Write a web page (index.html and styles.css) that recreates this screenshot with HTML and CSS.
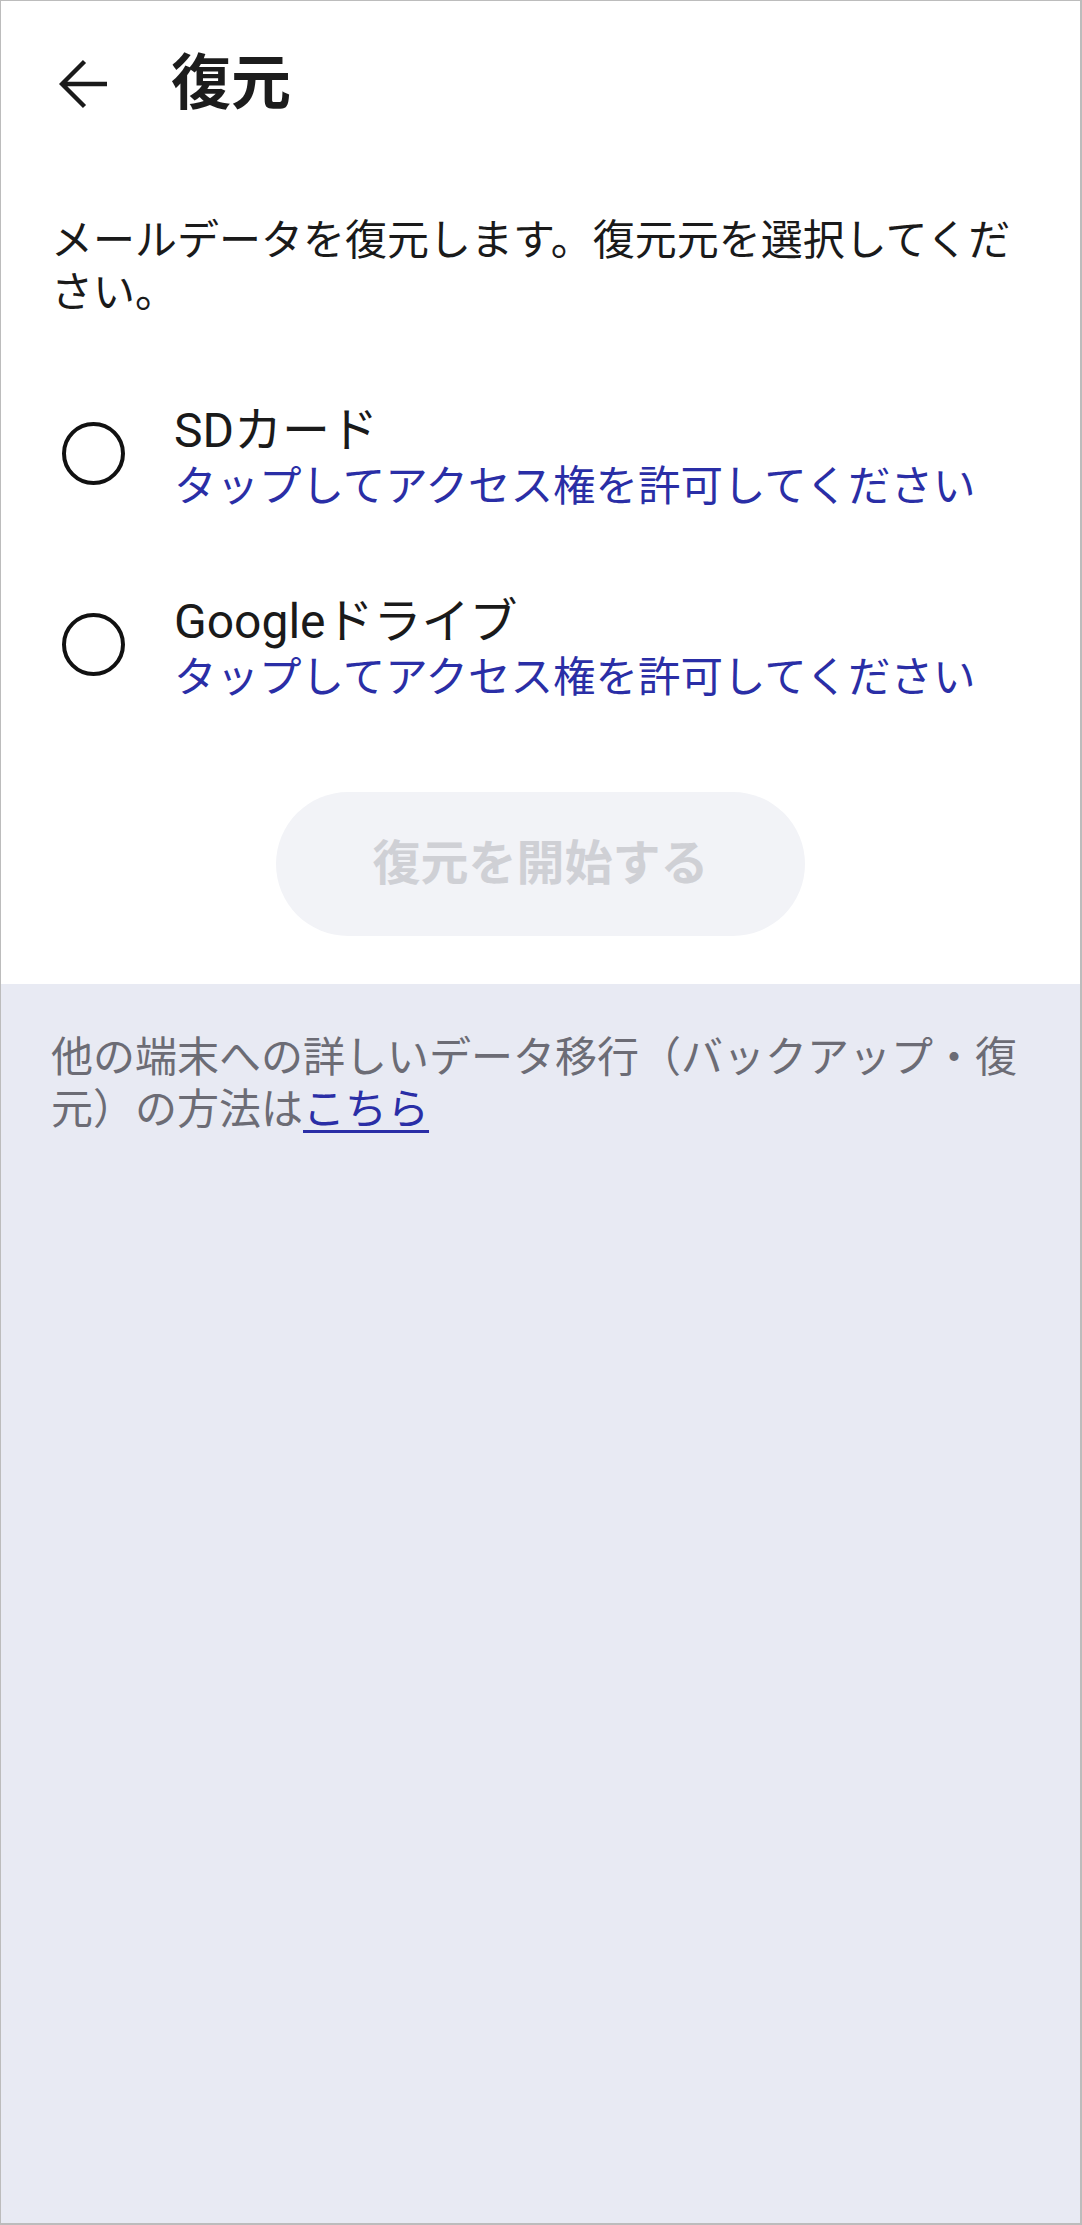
FILE: index.html
```html
<!DOCTYPE html>
<html lang="ja">
<head>
<meta charset="utf-8">
<title>復元</title>
<link rel="stylesheet" href="styles.css">
</head>
<body>
<div class="page">
  <section class="top">
    <header class="header">
      <svg class="back" viewBox="0 0 50 50" width="50" height="50" aria-hidden="true">
        <path d="M48 25 H4 M25.5 2.5 L3 25 L25.5 47.5" fill="none" stroke="#1a1a1a" stroke-width="4.4" stroke-linejoin="miter"/>
      </svg>
      <h1 class="title">復元</h1>
    </header>
    <p class="desc">メールデータを復元します。復元元を選択してください。</p>
    <div class="options">
      <div class="option">
        <span class="radio"></span>
        <div class="option-text">
          <div class="option-title">SDカード</div>
          <div class="option-sub">タップしてアクセス権を許可してください</div>
        </div>
      </div>
      <div class="option">
        <span class="radio"></span>
        <div class="option-text">
          <div class="option-title">Googleドライブ</div>
          <div class="option-sub">タップしてアクセス権を許可してください</div>
        </div>
      </div>
    </div>
    <div class="actions">
      <button class="start" disabled>復元を開始する</button>
    </div>
  </section>
  <section class="bottom">
    <p class="note">他の端末への詳しいデータ移行（バックアップ・復元）の方法は<a class="link" href="#">こちら</a></p>
  </section>
</div>
</body>
</html>
```
FILE: styles.css
```css
html, body {
  margin: 0;
  padding: 0;
  background: #ffffff;
}

body {
  font-family: Roboto, "Noto Sans CJK JP", sans-serif;
  color: #1a1a1a;
}

.page {
  box-sizing: border-box;
  width: 1082px;
  min-height: 2225px;
  border: 1px solid #bcbcbc;
  border-right-width: 2px;
  border-bottom-width: 2px;
  display: flex;
  flex-direction: column;
}

.top {
  background: #ffffff;
  padding: 0 50px 48px 50px;
}

.header {
  height: 166px;
  display: flex;
  align-items: center;
}

.back {
  display: block;
  margin-left: 8px;
  flex: none;
}

.title {
  margin: 0 0 0 62px;
  font-size: 60px;
  font-weight: 700;
  line-height: 70px;
  color: #1c1c1c;
}

.desc {
  margin: 48px 0 0 0;
  font-size: 42px;
  line-height: 52px;
  color: #1a1a1a;
}

.options {
  margin-top: 82px;
  display: flex;
  flex-direction: column;
  gap: 79px;
}

.option {
  display: flex;
  align-items: center;
}

.radio {
  box-sizing: border-box;
  width: 63px;
  height: 63px;
  border: 4px solid #111111;
  border-radius: 50%;
  margin-left: 11px;
  margin-top: -8px;
  flex: none;
}

.option-text {
  margin-left: 49px;
}

.option-title {
  font-size: 48px;
  line-height: 60px;
  color: #1a1a1a;
}

.option-sub {
  font-size: 42.5px;
  line-height: 52px;
  color: #2a2ea6;
}

.actions {
  margin-top: 88px;
  display: flex;
  justify-content: center;
}

.start {
  width: 529px;
  height: 144px;
  border: none;
  border-radius: 72px;
  background: #f2f3f7;
  color: #cfd0d5;
  font-family: Roboto, "Noto Sans CJK JP", sans-serif;
  font-size: 48px;
  line-height: 60px;
  font-weight: 700;
  padding: 0;
}

.bottom {
  flex: 1;
  background: #e8eaf3;
  padding: 48px 50px 0 50px;
}

.note {
  margin: 0;
  font-size: 42px;
  line-height: 52px;
  color: #6c6c75;
}

.link {
  color: #2a2ea6;
  text-decoration: underline;
  text-decoration-thickness: 3px;
  text-underline-offset: 6px;
}
```
